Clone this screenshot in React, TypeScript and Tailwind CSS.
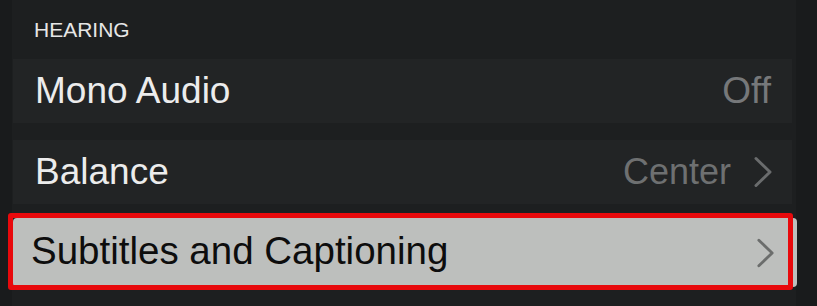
import React from "react";

const font = { fontFamily: '"Liberation Sans", Arial, sans-serif' };

function Chevron({ className }: { className?: string }) {
  return (
    <svg viewBox="0 0 20 32" className={className} fill="none">
      <path d="M3 2.5 L17 16 L3 29.5" stroke="currentColor" strokeWidth="3" strokeLinecap="round" strokeLinejoin="round" />
    </svg>
  );
}

export default function App() {
  return (
    <div className="flex h-[306px] w-[817px] overflow-hidden bg-[#191b1c]" style={font}>
      <div className="ml-[12px] flex w-[784px] flex-col bg-[#1d1f20] pt-[18px]">
        <div className="pl-[22px] text-[21px] leading-[24px] text-[#e6e6e6]">HEARING</div>

        <div className="ml-[1px] mt-[17px] flex h-[64px] w-[779px] items-center justify-between bg-[#222425] pl-[22px] pr-[21px]">
          <span className="text-[37px] leading-[64px] text-[#ececec]">Mono Audio</span>
          <span className="text-[37px] leading-[64px] text-[#76787a]">Off</span>
        </div>

        <div className="ml-[1px] mt-[17px] flex h-[64px] w-[779px] items-center justify-between bg-[#222425] pl-[22px] pr-[19px]">
          <span className="text-[37px] leading-[64px] text-[#ececec]">Balance</span>
          <div className="flex items-center gap-[22px]">
            <span className="text-[36px] leading-[64px] text-[#6e7071]">Center</span>
            <Chevron className="h-[32px] w-[20px] text-[#6a6c6d]" />
          </div>
        </div>

        <div className="relative ml-[1px] mt-[14px] flex h-[69px] w-[784px] items-center justify-between rounded-[4px] bg-[#bdbfbd] pb-[5px] pl-[18px] pr-[22px]">
          <span className="text-[38.5px] leading-[43px] text-[#0d0d0d]">Subtitles and Captioning</span>
          <Chevron className="mt-[5px] h-[32px] w-[19px] text-[#6b6d6c]" />
          <div className="pointer-events-none absolute left-[-5px] top-[-5px] h-[77px] w-[785px] rounded-[3px] border-[5px] border-[#e8090c]" />
        </div>
      </div>
    </div>
  );
}
